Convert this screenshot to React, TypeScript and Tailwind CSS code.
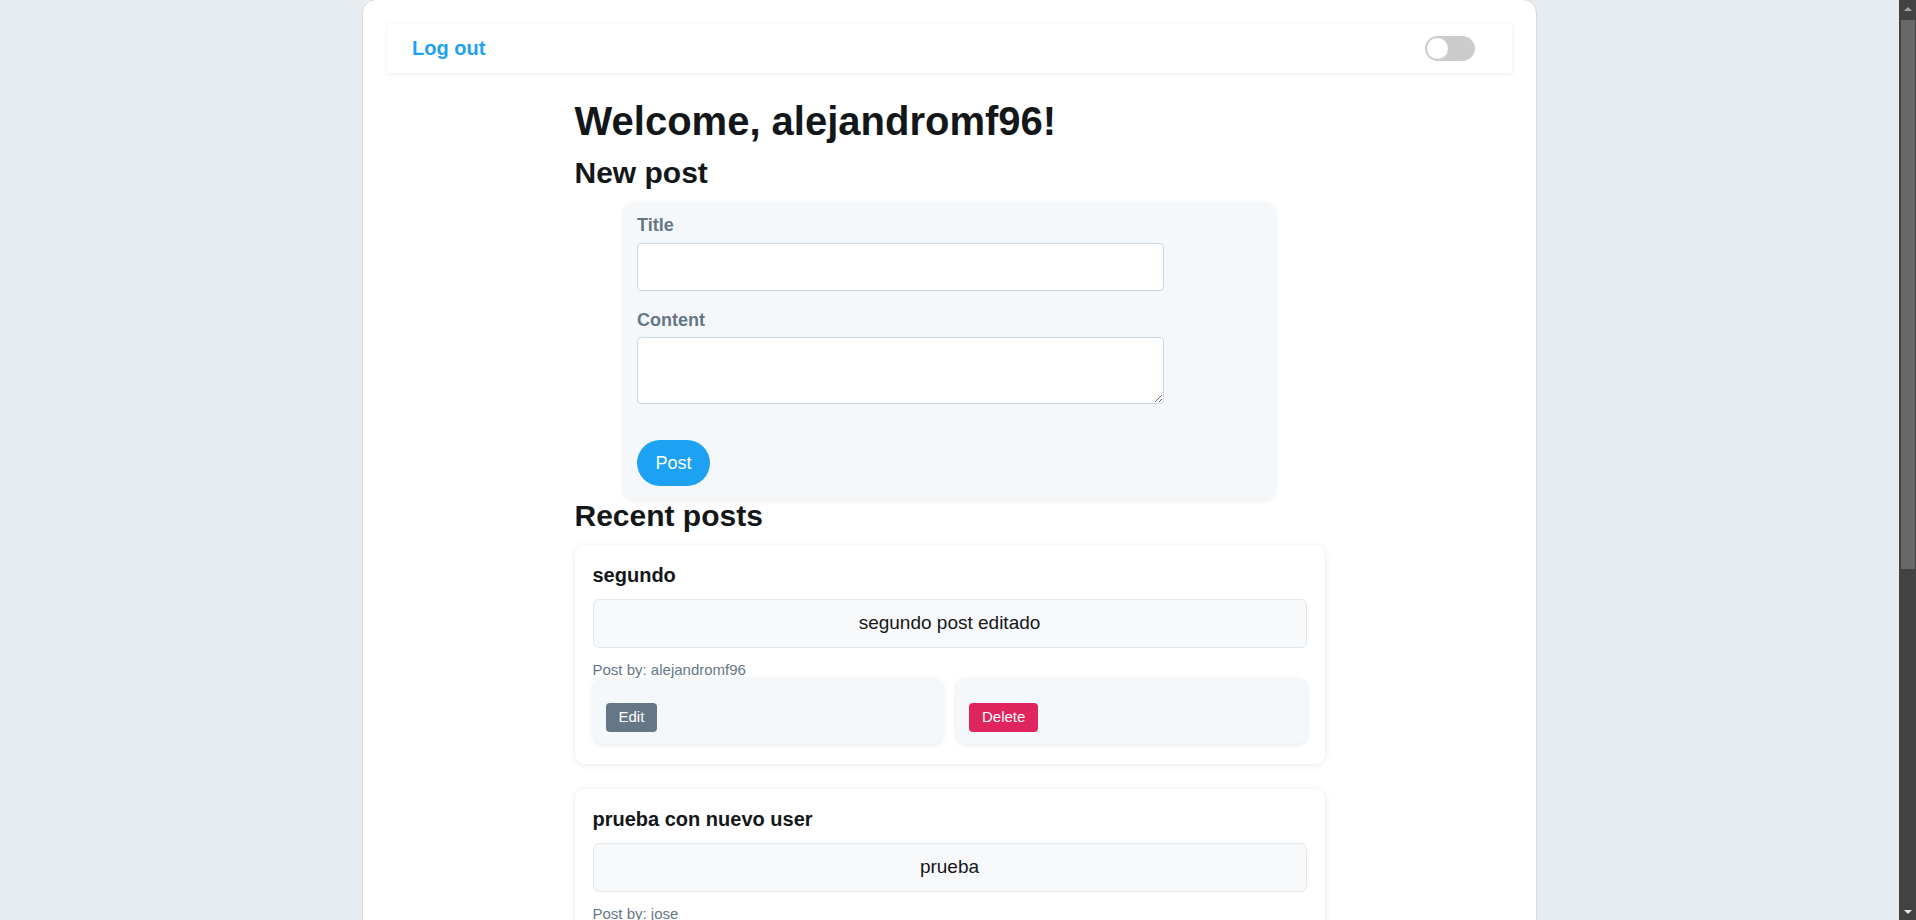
import { useState } from "react";

const currentUser = "alejandromf96";

const posts = [
  { id: 2, title: "segundo", content: "segundo post editado", author: "alejandromf96" },
  { id: 1, title: "prueba con nuevo user", content: "prueba", author: "jose" },
];

export default function App() {
  const [dark, setDark] = useState(false);

  return (
    <div className="flex h-screen overflow-hidden bg-[#e6ecf0] font-['Liberation_Sans',Arial,sans-serif] text-[#14171a]">
      <main className="flex-1 overflow-hidden">
        <div className="mx-auto -mt-px min-h-[1500px] w-[1175px] rounded-t-[14px] border border-[#d6dbe0] bg-white px-6 pt-6">
          {/* Navbar */}
          <nav className="flex h-[49px] items-center justify-between bg-white pl-[25px] pr-[37px] shadow-[0_1px_5px_rgba(0,0,0,0.08)]">
            <button className="text-[20px] font-bold leading-[23px] text-[#1da1f2]">Log out</button>
            <button
              onClick={() => setDark(!dark)}
              className="flex h-[25px] w-[50px] items-center rounded-full bg-[#cccccc] p-[2px]"
            >
              <span className="h-[21px] w-[21px] rounded-full bg-white" />
            </button>
          </nav>

          <div className="mx-auto mt-[26px] w-[750px]">
            <h1 className="text-[40px] font-bold leading-[45px]">Welcome, {currentUser}!</h1>
            <h2 className="mt-3 text-[30px] font-bold leading-[34px]">New post</h2>

            {/* New post form */}
            <form className="mx-auto mt-[13px] w-[651px] rounded-[10px] bg-[#f5f8fa] px-[13px] pt-3 pb-[13px] shadow-[0_1px_6px_rgba(0,0,0,0.09)]">
              <label className="block text-[18px] font-bold leading-[21px] text-[#657786]">Title</label>
              <input
                type="text"
                className="mt-[7px] block h-[48px] w-[527px] rounded-[4px] border border-[#ccd6dd] bg-white px-3 text-[16px]"
              />
              <label className="mt-[19px] block text-[18px] font-bold leading-[21px] text-[#657786]">Content</label>
              <textarea className="mt-[6px] block h-[67px] w-[527px] rounded-[4px] border border-[#ccd6dd] bg-white px-3 py-2 text-[16px]" />
              <button
                type="button"
                className="mt-[36px] h-[46px] w-[73px] rounded-full bg-[#1da1f2] text-[18px] text-white"
              >
                Post
              </button>
            </form>

            <h2 className="text-[30px] font-bold leading-[34px]">Recent posts</h2>

            <div className="mt-3 flex flex-col gap-[25px]">
              {posts.map((post) => (
                <PostCard key={post.id} post={post} />
              ))}
            </div>
          </div>
        </div>
      </main>

      {/* Scrollbar */}
      <div className="flex w-[17px] flex-col bg-[#424242]">
        <div className="flex h-[17px] items-center justify-center">
          <div className="h-0 w-0 border-x-[4px] border-b-[4px] border-x-transparent border-b-[#a3a3a3]" />
        </div>
        <div className="ml-[2px] mr-px mt-[3px] h-[549px] bg-[#686868]" />
        <div className="flex-1" />
        <div className="flex h-[17px] items-center justify-center">
          <div className="h-0 w-0 border-x-[4px] border-t-[4px] border-x-transparent border-t-[#e8e8e8]" />
        </div>
      </div>
    </div>
  );
}

function PostCard({ post }: { post: (typeof posts)[0] }) {
  const mine = post.author === currentUser;
  return (
    <div className="rounded-[10px] bg-white px-[18px] pt-[19px] pb-[20px] shadow-[0_1px_7px_rgba(0,0,0,0.09)]">
      <h3 className="text-[20px] font-bold leading-[23px]">{post.title}</h3>
      <div className="mt-3 flex h-[49px] items-center justify-center rounded-[6px] border border-[#e1e8ed] bg-[#f7f9fa] text-[19px]">
        {post.content}
      </div>
      <p className="mt-[13px] text-[15px] leading-[17px] text-[#657786]">Post by: {post.author}</p>
      {mine && (
        <div className="grid grid-cols-2 gap-[13px]">
          <div className="rounded-[10px] bg-[#f5f8fa] px-[13px] pt-[25px] pb-3 shadow-[0_1px_5px_rgba(0,0,0,0.1)]">
            <button className="flex h-[29px] items-center rounded-[4px] bg-[#657786] px-[13px] text-[15px] text-white">
              Edit
            </button>
          </div>
          <div className="rounded-[10px] bg-[#f5f8fa] px-[13px] pt-[25px] pb-3 shadow-[0_1px_5px_rgba(0,0,0,0.1)]">
            <button className="flex h-[29px] items-center rounded-[4px] bg-[#e0245e] px-[13px] text-[15px] text-white">
              Delete
            </button>
          </div>
        </div>
      )}
    </div>
  );
}
